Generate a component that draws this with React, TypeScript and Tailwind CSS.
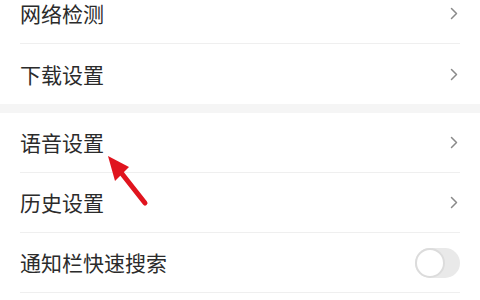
import React from "react";

const Chevron = () => (
  <svg width="8" height="13" viewBox="0 0 8 13" fill="none">
    <path d="M1.5 1.5L6.5 6.5L1.5 11.5" stroke="#8a8a8a" strokeWidth="1.5" strokeLinecap="round" strokeLinejoin="round" />
  </svg>
);

const Row = ({ label, divider = true, right }: { label: string; divider?: boolean; right?: React.ReactNode }) => (
  <div className="px-5">
    <div className={`flex h-[60px] items-center justify-between ${divider ? "border-b border-[#efefef]" : ""}`}>
      <span className="text-[21px] leading-none text-[#2b2b2b]">{label}</span>
      <div className="mr-[2px] flex items-center">{right ?? <Chevron />}</div>
    </div>
  </div>
);

const Toggle = () => (
  <div className="-mr-[2px] flex h-[30px] w-[45px] items-center rounded-full bg-[#e9e9e9]">
    <div className="h-[30px] w-[30px] rounded-full border-2 border-[#dcdcdc] bg-white" />
  </div>
);

const App = () => {
  return (
    <div
      className="relative h-[300px] w-[480px] overflow-hidden bg-white"
      style={{ fontFamily: '"Noto Sans CJK SC", "Noto Sans", sans-serif' }}
    >
      <div className="-mt-[16px]">
        <Row label="网络检测" />
        <Row label="下载设置" divider={false} />
        <div className="h-[9px] bg-[#f5f5f5]" />
        <Row label="语音设置" />
        <Row label="历史设置" />
        <Row label="通知栏快速搜索" right={<Toggle />} />
      </div>

      <svg className="absolute left-0 top-0" width="480" height="300" viewBox="0 0 480 300">
        <line x1="145" y1="203" x2="119" y2="170" stroke="#e0141e" strokeWidth="5" strokeLinecap="round" />
        <polygon points="108,156 129,167 115,181" fill="#e0141e" />
      </svg>
    </div>
  );
};

export default App;
